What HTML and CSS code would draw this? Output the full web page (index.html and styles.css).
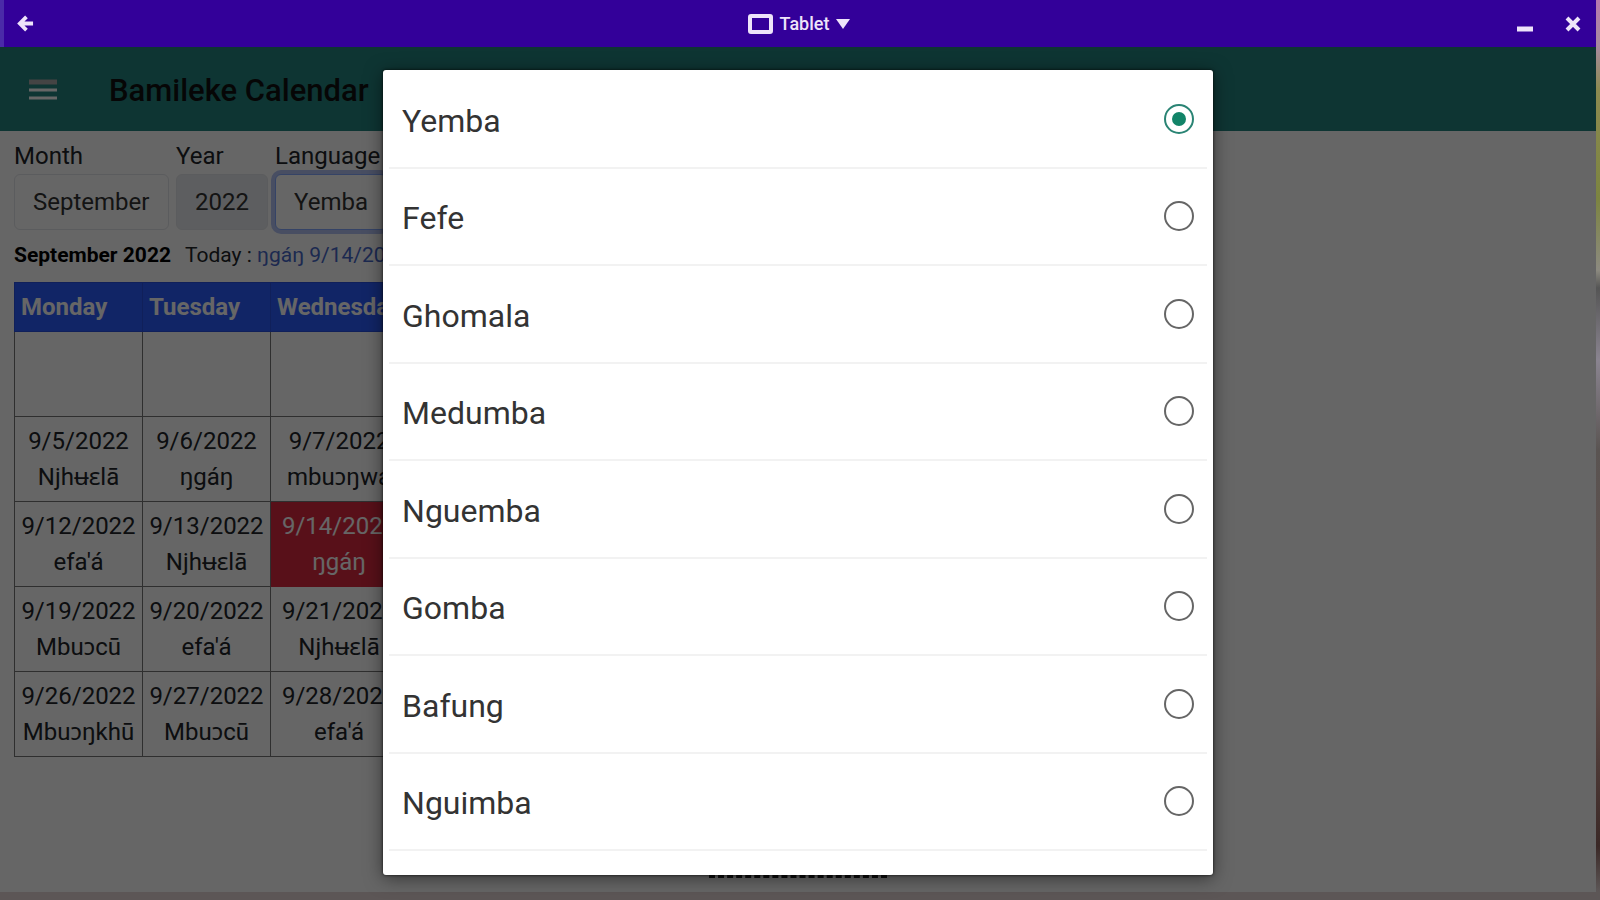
FILE: index.html
```html
<!DOCTYPE html>
<html lang="en">
<head>
  <meta charset="UTF-8">
  <title>Bamileke Calendar</title>
  <link rel="stylesheet" href="styles.css">
</head>
<body>
  <div class="window">
    <div class="titlebar">
      <button class="title-button back" aria-label="Back">
        <svg width="17" height="17" viewBox="0 0 18 18"><path d="M17 9H4M10 2L3 9l7 7" fill="none" stroke="currentColor" stroke-width="4"/></svg>
      </button>
      <button class="title-button device">
        <svg width="25" height="20" viewBox="0 0 25 20"><rect x="2" y="2" width="21" height="16" rx="1" fill="none" stroke="currentColor" stroke-width="4"/></svg>
        <span>Tablet</span>
        <svg width="14" height="10" viewBox="0 0 14 10"><path d="M0 0h14L7 10z" fill="currentColor"/></svg>
      </button>
      <div class="window-controls">
        <button class="title-button" aria-label="Minimize">
          <svg width="16" height="16" viewBox="0 0 16 16"><path d="M0 13h16" stroke="currentColor" stroke-width="5"/></svg>
        </button>
        <button class="title-button" aria-label="Close">
          <svg width="16" height="16" viewBox="0 0 16 16"><path d="M2 2l12 12M14 2L2 14" stroke="currentColor" stroke-width="4"/></svg>
        </button>
      </div>
    </div>

    <div class="app">
      <header class="appbar">
        <button class="menu-button" aria-label="Menu">
          <svg width="28" height="21" viewBox="0 0 28 21"><path d="M0 3h28" stroke="#aaa" stroke-width="5"/><path d="M0 11h28M0 19h28" stroke="#fff" stroke-width="3"/></svg>
        </button>
        <h1>Bamileke Calendar</h1>
      </header>

      <main class="content">
        <div class="filters">
          <div class="field">
            <label for="month">Month</label>
            <select id="month"><option>September</option></select>
          </div>
          <div class="field">
            <label for="year">Year</label>
            <select id="year" class="shaded"><option>2022</option></select>
          </div>
          <div class="field">
            <label for="language">Language</label>
            <select id="language" class="focused"><option>Yemba</option></select>
          </div>
        </div>

        <p class="summary"><strong>September 2022</strong> <span>Today : <a href="#today">ŋgáŋ 9/14/2022</a></span></p>

        <table class="calendar">
          <thead>
            <tr><th>Monday</th><th>Tuesday</th><th>Wednesday</th></tr>
          </thead>
          <tbody>
            <tr><td></td><td></td><td></td></tr>
            <tr><td>9/5/2022<br>Njhʉɛlā</td><td>9/6/2022<br>ŋgáŋ</td><td>9/7/2022<br>mbuɔŋwá</td></tr>
            <tr><td>9/12/2022<br>efa'á</td><td>9/13/2022<br>Njhʉɛlā</td><td class="today" id="today">9/14/2022<br>ŋgáŋ</td></tr>
            <tr><td>9/19/2022<br>Mbuɔcū</td><td>9/20/2022<br>efa'á</td><td>9/21/2022<br>Njhʉɛlā</td></tr>
            <tr><td>9/26/2022<br>Mbuɔŋkhū</td><td>9/27/2022<br>Mbuɔcū</td><td>9/28/2022<br>efa'á</td></tr>
          </tbody>
        </table>
      </main>
      <div class="footer-mark"></div>

      <div class="overlay">
        <form class="dialog" role="dialog" aria-label="Language">
          <label class="option"><span>Yemba</span><input type="radio" name="lang" checked></label>
          <label class="option"><span>Fefe</span><input type="radio" name="lang"></label>
          <label class="option"><span>Ghomala</span><input type="radio" name="lang"></label>
          <label class="option"><span>Medumba</span><input type="radio" name="lang"></label>
          <label class="option"><span>Nguemba</span><input type="radio" name="lang"></label>
          <label class="option"><span>Gomba</span><input type="radio" name="lang"></label>
          <label class="option"><span>Bafung</span><input type="radio" name="lang"></label>
          <label class="option"><span>Nguimba</span><input type="radio" name="lang"></label>
        </form>
      </div>
    </div>
  </div>
</body>
</html>
```

FILE: styles.css
```css
* {
  box-sizing: border-box;
}

body {
  margin: 0;
  height: 100vh;
  padding: 0 4px 8px 0;
  font-family: Roboto, "Noto Sans", sans-serif;
  font-size: 24px;
  line-height: 36px;
  color: #212529;
  /* strip of desktop wallpaper showing round the window */
  background: linear-gradient(#b878b0 0, #a88aa0 5%, #8c8a50 10%, #7c8440 22%, #8c8a80 30%, #555 32%, #8a8490 40%, #5a5452 50%, #604c48 75%, #3a2826 94%, #5c5656 99%);
}

.window {
  display: flex;
  flex-direction: column;
  height: 100%;
}

.titlebar {
  display: grid;
  grid-template-columns: 1fr auto 1fr;
  align-items: center;
  height: 47px;
  padding: 0 15px 0 13px;
  background-color: #330099;
  border-left: 4px solid #4a2aa8;
  color: #eee4fa;
}

.title-button {
  display: flex;
  align-items: center;
  padding: 0;
  border: none;
  background: none;
  color: inherit;
  font: 500 18px Roboto, sans-serif;
}

.device {
  gap: 7px;
}

.window-controls {
  display: flex;
  justify-content: flex-end;
  gap: 32px;
}

.app {
  position: relative;
  flex: 1;
  display: flex;
  flex-direction: column;
  background-color: white;
}

.appbar {
  display: flex;
  align-items: center;
  gap: 52px;
  height: 84px;
  padding: 0 29px;
  background-color: #238480;
}

.menu-button {
  display: flex;
  padding: 0;
  border: none;
  background: none;
}

.appbar h1 {
  margin: 0;
  padding-top: 3px;
  font-size: 31px;
  font-weight: 500;
  color: #111;
}

.content {
  flex: 1;
  padding: 7px 14px;
}

.filters {
  display: flex;
  gap: 7px;
}

.field {
  display: flex;
  flex-direction: column;
}

.field select {
  appearance: none;
  padding: 9px 18px;
  border: 1px solid #e4e6ea;
  border-radius: 6px;
  background-color: white;
  font: inherit;
  color: #333;
}

.field .shaded {
  background-color: #e9ecef;
}

.field .focused {
  border-color: #86a8fe;
  box-shadow: 0 0 0 4px #b4c4f4;
}

.summary {
  display: flex;
  gap: 14px;
  margin: 7px 0 9px;
  font-size: 21px;
}

.summary strong {
  color: #000;
}

.summary a {
  color: #4868c8;
  text-decoration: none;
}

.calendar {
  border-collapse: collapse;
}

.calendar th {
  padding: 6px;
  background-color: #2c5cff;
  border: 1px solid #2850e0;
  text-align: left;
  color: white;
}

.calendar td {
  min-width: 128px;
  height: 85px;
  padding: 6px;
  border: 1px solid #777;
  text-align: center;
}

.calendar .today {
  background-color: #dc2a40;
  border-color: #dc2a40;
  color: white;
}

.footer-mark {
  align-self: center;
  width: 178px;
  height: 3px;
  margin-bottom: 14px;
  border-top: 3px dashed #222;
}

.overlay {
  position: absolute;
  inset: 0;
  display: flex;
  justify-content: center;
  padding: 23px 0 17px;
  background-color: rgba(0, 0, 0, 0.6);
}

.dialog {
  display: flex;
  flex-direction: column;
  width: 52%;
  padding: 1px 6px 24px;
  background-color: white;
  border-radius: 3px;
  box-shadow: 0 3px 18px rgba(0, 0, 0, 0.5), 0 0 3px rgba(0, 0, 0, 0.8);
}

.option {
  flex: 1;
  display: flex;
  justify-content: space-between;
  align-items: center;
  padding: 0 13px;
  border-bottom: 2px solid #f2f2f2;
  font-size: 32px;
  color: #333;
}

.option span {
  padding-top: 4px;
}

.option input {
  appearance: none;
  display: grid;
  place-items: center;
  width: 30px;
  height: 30px;
  margin: 0;
  border: 2px solid #666;
  border-radius: 50%;
}

.option input:checked {
  border-color: #2a8474;
}

.option input:checked::before {
  content: "";
  width: 14px;
  height: 14px;
  border-radius: 50%;
  background-color: #128468;
}
```
